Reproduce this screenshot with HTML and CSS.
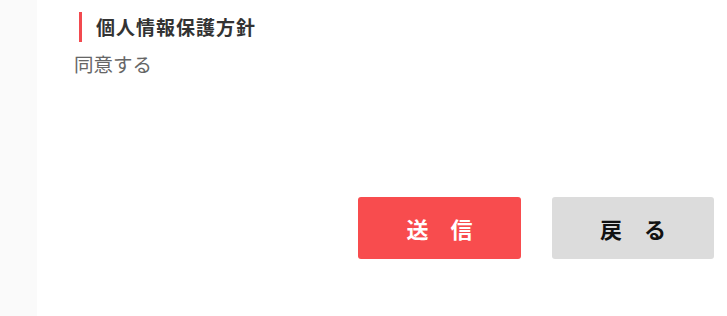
FILE: index.html
```html
<!DOCTYPE html>
<html lang="ja">
<head>
<meta charset="utf-8">
<link rel="stylesheet" href="styles.css">
</head>
<body>
<div class="page">
  <aside class="side"></aside>
  <main class="content">
    <section class="field">
      <h2 class="field-title">個人情報保護方針</h2>
      <p class="field-value">同意する</p>
    </section>
    <div class="actions">
      <button class="btn btn-send" type="button">送　信</button>
      <button class="btn btn-back" type="button">戻　る</button>
    </div>
  </main>
</div>
</body>
</html>
```
FILE: styles.css
```css
html, body {
  margin: 0;
  padding: 0;
  background: #ffffff;
}
body {
  font-family: "Noto Sans CJK JP", "Noto Sans", sans-serif;
  width: 727px;
  height: 316px;
  overflow: hidden;
}
.page {
  display: flex;
  height: 316px;
}
.side {
  width: 37px;
  flex: none;
  background: #fafafa;
}
.content {
  flex: 1;
  display: flex;
  flex-direction: column;
  padding: 12px 0 0 0;
}
.field-title {
  margin: 0 0 0 42px;
  border-left: 3px solid #f24a4f;
  padding-left: 14px;
  height: 30px;
  line-height: 30px;
  font-size: 19px;
  font-weight: 700;
  letter-spacing: 1px;
  color: #333333;
}
.field-value {
  margin: 8px 0 0 37px;
  font-size: 19.5px;
  line-height: 28px;
  color: #666666;
}
.actions {
  display: flex;
  gap: 31px;
  margin: 119px 0 0 321px;
}
.btn {
  width: 163px;
  height: 62px;
  border: none;
  border-radius: 3px;
  font-family: "Noto Sans CJK JP", sans-serif;
  font-size: 22px;
  font-weight: 700;
  padding: 0;
  cursor: pointer;
}
.btn-send {
  background: #f84c4e;
  color: #ffffff;
}
.btn-back {
  width: 162px;
  background: #dcdcdc;
  color: #111111;
}
```
